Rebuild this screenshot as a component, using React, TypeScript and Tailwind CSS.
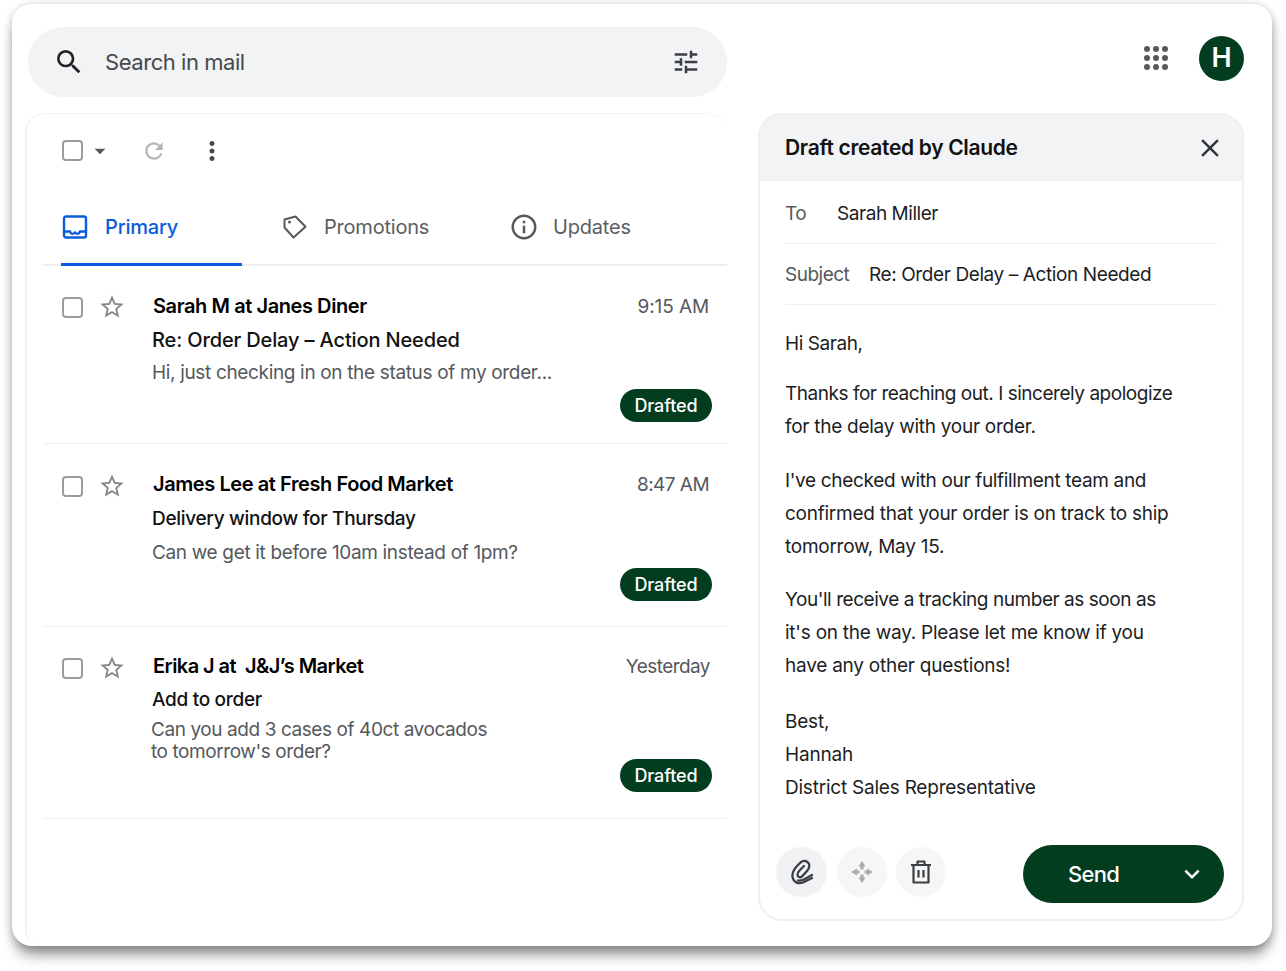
import React from "react";
import {
  MdSearch, MdTune, MdRefresh, MdMoreVert, MdArrowDropDown, MdInfoOutline, MdStarBorder, MdClose, MdKeyboardArrowDown,
} from "react-icons/md";

const font = { fontFamily: '"Inter", "Liberation Sans", sans-serif' };

function Check() {
  return <div className="w-[21px] h-[21px] rounded-[4px] border-2 border-[#9a9ca0] shrink-0" />;
}

function Drafted() {
  return (
    <div className="w-[92px] h-[33px] rounded-full bg-[#033d1f] text-white text-[18px] font-medium flex items-center justify-center tracking-[-0.1px]">
      Drafted
    </div>
  );
}

function Row(props: { sender: string; senderClass: string; subject: string; subjectClass: string; time: string; timeClass: string; preview: React.ReactNode; rowClass: string; previewClass: string; badgeClass: string; checkClass: string }) {
  return (
    <div className={"flex border-b border-[#eeeff0] pl-[19px] " + props.rowClass}>
      <div className={"flex items-center shrink-0 self-start " + props.checkClass}>
        <Check />
        <MdStarBorder className="ml-[15px] text-[#85888c]" size={28} />
      </div>
      <div className="ml-[26px] flex-1 min-w-0 flex flex-col">
        <div className={"flex justify-between h-[34px] items-center " + props.timeClass}>
          <span className={"pl-[1px] text-[20px] font-semibold text-black whitespace-nowrap " + props.senderClass}>{props.sender}</span>
          <span className="pt-[2px] text-[19px] text-[#55585c]">{props.time}</span>
        </div>
        <div className={"font-medium text-[#111] leading-[34px] whitespace-nowrap " + props.subjectClass}>{props.subject}</div>
        <div className={"text-[19px] text-[#55585c] " + props.previewClass}>{props.preview}</div>
        <div className={"flex justify-end pr-[15px] " + props.badgeClass}>
          <Drafted />
        </div>
      </div>
    </div>
  );
}

function Tab(props: { icon: React.ReactNode; label: string; active?: boolean; className: string }) {
  return (
    <div className={"flex items-center " + props.className}>
      {props.icon}
      <span className={"text-[20px] tracking-[-0.2px] " + (props.active ? "font-medium text-[#0b5cdc]" : "text-[#5a5d61]")}>{props.label}</span>
    </div>
  );
}

function Para(props: { lines: [string, string][]; className?: string }) {
  return (
    <div className={props.className}>
      {props.lines.map(([l, c]) => (
        <div key={l} className={"leading-[33px] whitespace-nowrap " + c}>{l}</div>
      ))}
    </div>
  );
}

export default function App() {
  return (
    <div style={font} className="w-[1286px] h-[971px] bg-white pt-[2px] px-[12px] overflow-hidden">
      <div className="w-[1260px] h-[944px] bg-white rounded-[20px] border-t-2 border-[#eceae6] shadow-[0_12px_14px_-3px_rgba(0,0,0,0.38),-2px_3px_8px_rgba(0,0,0,0.09),3px_3px_8px_rgba(0,0,0,0.12)] flex flex-col">
        <div className="flex items-start pl-[16px] pr-[28px] pt-[23px] h-[109px] shrink-0">
          <div className="w-[699px] h-[70px] rounded-full bg-[#f1f3f4] flex items-center pl-[25px] pr-[26px]">
            <MdSearch size={32} className="text-[#1f2124]" />
            <span className="ml-[20px] text-[22px] text-[#46494d] tracking-[-0.45px] flex-1">Search in mail</span>
            <MdTune size={30} className="text-[#3c3f43]" />
          </div>
          <div className="flex-1" />
          <svg width="24" height="24" viewBox="0 0 24 24" className="text-[#55585c] mt-[19px] mr-[31px]" fill="currentColor">
            {[3, 12, 21].flatMap((y) => [3, 12, 21].map((x) => <circle key={x + "-" + y} cx={x} cy={y} r="3" />))}
          </svg>
          <div className="mt-[9px] w-[45px] h-[45px] rounded-full bg-[#033d1f] text-white text-[27px] font-semibold flex items-center justify-center">H</div>
        </div>

        <div className="flex flex-1 min-h-0 pl-[13px]">
          <div className="w-[702px] border-l-2 border-t border-[#f4f4f5] rounded-tl-[20px] rounded-tr-[20px] rounded-bl-[16px] pl-[16px]">
            <div className="flex items-center h-[73px] pl-[19px]">
              <Check />
              <MdArrowDropDown size={26} className="ml-[4px] text-[#55585c]" />
              <MdRefresh size={26} className="ml-[28px] text-[#b3b5b8]" />
              <MdMoreVert size={30} className="ml-[30px] text-[#45484c]" />
            </div>
            <div className="flex border-b-2 border-[#ecedee] h-[79px]">
              <Tab
                active
                className="w-[181px] ml-[18px] border-b-[3px] border-[#0b5cdc] h-[79px] pt-[3px]"
                icon={
                  <svg width="26" height="26" viewBox="0 0 26 26" fill="none" stroke="#0b5cdc" strokeWidth="2.4" className="ml-[1px] mr-[17px]">
                    <rect x="2" y="2.5" width="22" height="21" rx="2" />
                    <path d="M3 17.5h5c1 3 3 3 5 1 2 2 4 2 5-1h5" strokeWidth="2.4" />
                  </svg>
                }
                label="Primary"
              />
              <Tab
                className="ml-[41px] w-[226px] pt-[3px]"
                icon={
                  <svg width="24" height="24" viewBox="0 0 24 24" fill="none" stroke="#55585c" strokeWidth="2" strokeLinejoin="round" className="mr-[17px]">
                    <path d="M1.5 4.5 L12.5 1.5 L22.5 11.7 L10.5 22.5 L1.5 12.5 Z" />
                    <circle cx="6.5" cy="7" r="1.5" fill="#55585c" stroke="none" />
                  </svg>
                }
                label="Promotions"
              />
              <Tab
                className="pt-[3px]"
                icon={<MdInfoOutline size={30} className="text-[#55585c] mr-[14px]" />}
                label="Updates"
              />
            </div>
            <Row
              sender="Sarah M at Janes Diner"
              senderClass="tracking-[-0.42px]"
              subject="Re: Order Delay – Action Needed"
              subjectClass="text-[20px] tracking-[-0.14px]"
              time="9:15 AM"
              timeClass="pr-[18px] tracking-[-0.1px]"
              preview="Hi, just checking in on the status of my order..."
              rowClass="pt-[23px] pb-[21px]"
              previewClass="leading-[32px] whitespace-nowrap tracking-[-0.34px]"
              badgeClass=""
              checkClass="h-[36px]"
            />
            <Row
              sender="James Lee at Fresh Food Market"
              senderClass="tracking-[-0.42px]"
              subject="Delivery window for Thursday"
              subjectClass="text-[19px] tracking-[-0.3px] mt-[1px]"
              time="8:47 AM"
              timeClass="pr-[18px] tracking-[-0.55px]"
              preview="Can we get it before 10am instead of 1pm?"
              rowClass="pt-[23px] pb-[25px]"
              previewClass="leading-[34px] whitespace-nowrap tracking-[-0.34px]"
              badgeClass="-mt-[2px]"
              checkClass="h-[38px]"
            />
            <Row
              sender={"Erika J at\u00A0 J&J’s Market"}
              senderClass="tracking-[-0.55px]"
              subject="Add to order"
              subjectClass="text-[19px] tracking-[-0.3px]"
              time="Yesterday"
              timeClass="pr-[17px] tracking-[-0.55px]"
              preview={<><div>Can you add 3 cases of 40ct avocados</div><div>to tomorrow's order?</div></>}
              rowClass="pt-[22px] pb-[26px]"
              previewClass="leading-[22px] whitespace-nowrap mt-[2px] -ml-[1px] tracking-[-0.42px]"
              badgeClass="-mt-[4px]"
              checkClass="h-[38px]"
            />
          </div>

          <div className="ml-[31px] w-[486px] h-[808px] border-2 border-[#eeeff0] rounded-[24px] flex flex-col overflow-hidden">
            <div className="h-[66px] bg-[#f1f3f4] flex items-center justify-between pl-[25px] pr-[17px] shrink-0">
              <span className="text-[21px] font-semibold text-[#111] tracking-[-0.32px]">Draft created by Claude</span>
              <MdClose size={30} className="text-[#33363a]" />
            </div>
            <div className="mx-[25px] h-[63px] border-b border-[#eeeff0] flex items-center text-[19px] pt-[5px]">
              <span className="text-[#55585c] w-[52px] tracking-[-0.45px]">To</span>
              <span className="text-[#1c1d1f] tracking-[-0.45px]">Sarah Miller</span>
            </div>
            <div className="mx-[25px] h-[61px] border-b border-[#eeeff0] flex items-center text-[19px] pt-[3px]">
              <span className="text-[#55585c] w-[84px] tracking-[-0.5px]">Subject</span>
              <span className="text-[#1c1d1f] tracking-[-0.4px]">Re: Order Delay – Action Needed</span>
            </div>
            <div className="mx-[25px] pt-[22px] text-[19px] text-[#1c1d1f] flex-1">
              <Para lines={[["Hi Sarah,", "tracking-[-0.42px]"]]} />
              <Para className="mt-[17px]" lines={[["Thanks for reaching out. I sincerely apologize", "tracking-[-0.47px]"], ["for the delay with your order.", "tracking-[-0.27px]"]]} />
              <Para className="mt-[21px]" lines={[["I've checked with our fulfillment team and", "tracking-[-0.34px]"], ["confirmed that your order is on track to ship", "tracking-[-0.25px]"], ["tomorrow, May 15.", "tracking-[-0.26px]"]]} />
              <Para className="mt-[20px]" lines={[["You'll receive a tracking number as soon as", "tracking-[-0.45px]"], ["it's on the way. Please let me know if you", "tracking-[-0.25px]"], ["have any other questions!", "tracking-[-0.24px]"]]} />
              <Para className="mt-[23px]" lines={[["Best,", "tracking-[-0.2px]"], ["Hannah", "tracking-[-0.2px]"], ["District Sales Representative", "tracking-[-0.22px]"]]} />
            </div>
            <div className="flex items-center pl-[16px] pr-[18px] pb-[16px] shrink-0">
              <div className="flex items-center mb-[4px]">
                <div className="w-[51px] h-[50px] rounded-full bg-[#f1f2f3] flex items-center justify-center">
                  <svg width="24" height="26" viewBox="0 0 24 26" fill="none" stroke="#3c3f43" strokeWidth="2.3" strokeLinecap="round" strokeLinejoin="round">
                    <path d="M22 19 L13 23.5 C8 25.5 3.5 23 2.5 18 C2 14 3.5 11 6.5 7.5 L10.5 3.5 C13.5 1 17.5 1.5 19 5 C20 7.5 19 9.5 17 12 L12 17.5 C10 19 7.5 18 7.5 15.5 C7.5 13.5 8.5 12.5 10 11 L14 7" />
                    <path d="M8 21.5 C10 22 12 21.5 14 20.5 L22 16" />
                  </svg>
                </div>
                <div className="ml-[10px] w-[50px] h-[50px] rounded-full bg-[#f5f6f6] flex items-center justify-center">
                  <svg width="24" height="24" viewBox="0 0 24 24" fill="#a9acaf">
                    <path d="M12 1 L15.5 6.5 L13.5 6.5 L13.5 9.5 L10.5 9.5 L10.5 6.5 L8.5 6.5 Z" />
                    <path d="M12 23 L15.5 17.5 L13.5 17.5 L13.5 14.5 L10.5 14.5 L10.5 17.5 L8.5 17.5 Z" />
                    <path d="M1 12 L7 8.5 L7 10.5 L9.5 10.5 L9.5 13.5 L7 13.5 L7 15.5 Z" />
                    <path d="M23 12 L17 8.5 L17 10.5 L14.5 10.5 L14.5 13.5 L17 13.5 L17 15.5 Z" />
                  </svg>
                </div>
                <div className="ml-[9px] w-[50px] h-[50px] rounded-full bg-[#f5f6f6] flex items-center justify-center">
                  <svg width="22" height="24" viewBox="0 0 22 24" fill="none" stroke="#3c3f43" strokeWidth="2.2" strokeLinejoin="round">
                    <path d="M1 5 H21" />
                    <path d="M7.5 5 V1.5 H14.5 V5" />
                    <path d="M3.5 5 V22.5 H18.5 V5" />
                    <path d="M8.5 10 V17.5 M13.5 10 V17.5" />
                  </svg>
                </div>
              </div>
              <div className="ml-[77px] w-[202px] h-[58px] rounded-full bg-[#033d1f] text-white flex items-center">
                <span className="ml-[45px] text-[22px] font-medium tracking-[-0.7px]">Send</span>
                <MdKeyboardArrowDown size={30} className="ml-auto mr-[17px]" />
              </div>
            </div>
          </div>
        </div>
      </div>
    </div>
  );
}
